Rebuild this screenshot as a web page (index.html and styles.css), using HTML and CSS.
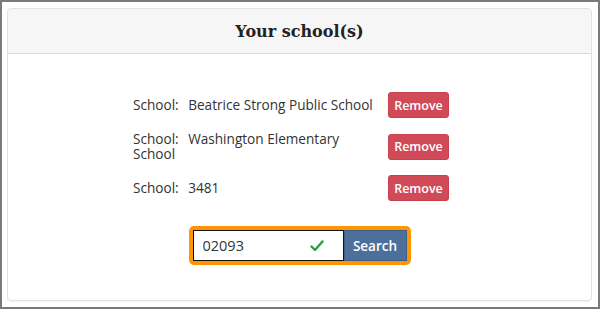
FILE: index.html
```html
<!DOCTYPE html>
<html lang="en">
<head>
    <meta charset="UTF-8">
    <meta name="viewport" content="width=device-width, initial-scale=1.0">
    <title>Your school(s)</title>
    <link rel="stylesheet" href="styles.css">
</head>
<body>

    <div class="frame">
        <div class="card">
            <div class="card-header">
                <h2>Your school(s)</h2>
            </div>

            <div class="card-body">
                <!-- Liste des écoles -->
                <ul class="school-list">
                    <li class="school-row">
                        <span class="school-name"><span class="label">School:</span> Beatrice Strong Public School</span>
                        <button class="btn-remove">Remove</button>
                    </li>
                    <li class="school-row">
                        <span class="school-name"><span class="label">School:</span> Washington Elementary School</span>
                        <button class="btn-remove">Remove</button>
                    </li>
                    <li class="school-row">
                        <span class="school-name"><span class="label">School:</span> 3481</span>
                        <button class="btn-remove">Remove</button>
                    </li>
                </ul>

                <!-- Recherche -->
                <div class="search-group">
                    <div class="search-field">
                        <input type="text" value="02093">
                        <svg class="check" width="14" height="12" viewBox="0 0 14 12">
                            <path d="M1.5 6.5 L5 10 L12.5 1.5" fill="none" stroke="#2a9d45" stroke-width="2.4" stroke-linecap="round" stroke-linejoin="round"/>
                        </svg>
                    </div>
                    <button class="btn-search">Search</button>
                </div>
            </div>
        </div>
    </div>

</body>
</html>
```

FILE: styles.css
```css
html, body {
    margin: 0;
    padding: 0;
}

body {
    font-family: "Open Sans", Arial, sans-serif;
    color: #333;
    background-color: #fff;
}

.frame {
    width: 600px;
    height: 309px;
    box-sizing: border-box;
    border: 2px solid #7a7a7a;
    padding: 6px 6px 0 5px;
}

.card {
    height: 293px;
    box-sizing: border-box;
    border: 1px solid #e2e2e2;
    border-radius: 4px;
    box-shadow: 0 1px 1px rgba(0, 0, 0, 0.05);
    background-color: #fff;
}

.card-header {
    height: 44px;
    background-color: #f6f6f6;
    border-bottom: 1px solid #dcdcdc;
    border-radius: 4px 4px 0 0;
    display: flex;
    align-items: center;
    justify-content: center;
}

.card-header h2 {
    margin: 0;
    font-family: "DejaVu Serif", "Liberation Serif", serif;
    font-size: 16px;
    font-weight: bold;
    color: #222;
}

.card-body {
    padding-top: 38px;
}

.school-list {
    list-style: none;
    margin: 0 auto;
    padding: 0 17px 0 0;
    width: 316px;
}

.school-row {
    display: flex;
    align-items: center;
    justify-content: space-between;
    margin-bottom: 14px;
}

.school-name {
    width: 243px;
    font-size: 13.6px;
    line-height: 14.5px;
}

.label {
    margin-right: 6px;
}

.btn-remove {
    flex-shrink: 0;
    width: 61px;
    height: 26px;
    padding: 0;
    border: 1px solid #c9404e;
    border-radius: 3px;
    background-color: #d04a58;
    color: #fff;
    font-family: "Open Sans", Arial, sans-serif;
    font-size: 12.5px;
    font-weight: 600;
    cursor: pointer;
}

.search-group {
    display: flex;
    width: 222px;
    height: 39px;
    box-sizing: border-box;
    margin: 25px auto 0;
    border: 4px solid #ff9500;
    border-radius: 5px;
}

.search-field {
    flex: 1;
    min-width: 0;
    display: flex;
    align-items: center;
    border: 1px solid #111;
    background-color: #fff;
}

.search-field input {
    flex: 1;
    min-width: 0;
    border: none;
    outline: none;
    padding: 0 0 0 9px;
    font-family: "Open Sans", Arial, sans-serif;
    font-size: 14.5px;
    color: #333;
    background: transparent;
}

.check {
    margin-right: 19px;
}

.btn-search {
    flex-shrink: 0;
    width: 63px;
    padding: 0;
    border: 1px solid #3e5f88;
    background-color: #4d6f9c;
    color: #fff;
    font-family: "Open Sans", Arial, sans-serif;
    font-size: 13.5px;
    font-weight: 600;
    cursor: pointer;
}
```
